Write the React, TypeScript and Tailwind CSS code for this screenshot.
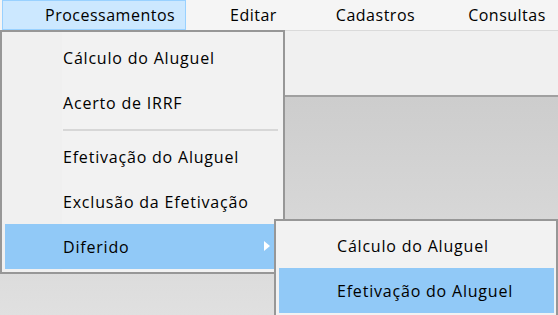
import React from 'react';

const font = { fontFamily: '"Open Sans", "Noto Sans", sans-serif' };

const MenuItem: React.FC<{ label: string; active?: boolean; sub?: boolean }> = ({ label, active, sub }) => (
  <div
    className={`relative flex h-[45px] items-center whitespace-nowrap pl-[58px] pr-3 text-[16px] tracking-[0.8px] text-black ${
      active ? 'bg-[#91c9f7]' : ''
    }`}
  >
    {label}
    {sub && (
      <svg className="absolute right-[8px] top-[17px]" width="6" height="10" viewBox="0 0 6 10">
        <path d="M0 0 L6 5 L0 10 Z" fill="#ffffff" />
      </svg>
    )}
  </div>
);

export default function App() {
  return (
    <div className="relative h-[315px] w-[558px] overflow-hidden bg-white" style={font}>
      {/* menu bar */}
      <div className="flex h-[31px] items-center whitespace-nowrap border-b border-[#dadada] bg-[#f5f5f5] text-[16px] tracking-[0.5px] text-black">
        <div className="ml-[2px] flex h-[30px] w-[184px] items-center border border-[#99d1ff] bg-[#cce8ff] pl-[42px]">
          Processamentos
        </div>
        <div className="ml-[44px]">Editar</div>
        <div className="ml-[59px]">Cadastros</div>
        <div className="ml-[53px]">Consultas</div>
      </div>
      {/* toolbar strip */}
      <div className="h-[66px] border-b-2 border-[#a0a0a0] bg-[#f0f0f0]" />
      {/* workspace */}
      <div className="h-[218px] bg-gradient-to-b from-[#cdcdcd] via-[#d6d6d6] to-[#e0e0e0]" />

      {/* main dropdown */}
      <div className="absolute left-0 top-[30px] w-[285px] border-2 border-[#979797] bg-[#f2f2f2] py-[3px] pl-[3px] pr-[5px]">
        <div className="absolute bottom-0 left-0 top-0 w-[60px] bg-[#f0f0f0]" />
        <div className="relative">
          <MenuItem label="Cálculo do Aluguel" />
          <MenuItem label="Acerto de IRRF" />
          <div className="flex h-[9px] items-center pl-[58px]">
            <div className="h-[2px] w-full bg-[#d7d7d7]" />
          </div>
          <MenuItem label="Efetivação do Aluguel" />
          <MenuItem label="Exclusão da Efetivação" />
          <MenuItem label="Diferido" active sub />
        </div>
      </div>

      {/* submenu */}
      <div className="absolute left-[274px] top-[219px] w-[284px] border-2 border-[#979797] bg-[#f2f2f2] py-[2px] pl-[3px] pr-[2px]">
        <MenuItem label="Cálculo do Aluguel" />
        <MenuItem label="Efetivação do Aluguel" active />
      </div>
    </div>
  );
}
